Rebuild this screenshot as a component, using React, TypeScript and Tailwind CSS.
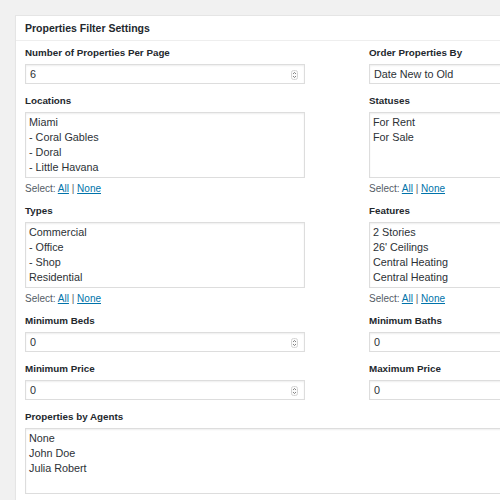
import React from 'react';

const Spinner = () => (
  <svg className="absolute right-[6px] top-[5px]" width="7" height="10" viewBox="0 0 7 10">
    <rect x="0.5" y="0.5" width="6" height="9" rx="2" fill="#fafafa" stroke="#d4d4d4" />
    <path d="M2 4L3.5 2.5L5 4" fill="none" stroke="#666" strokeWidth="0.8" />
    <path d="M2 6L3.5 7.5L5 6" fill="none" stroke="#666" strokeWidth="0.8" />
  </svg>
);

const Label = ({ children }: { children: React.ReactNode }) => (
  <div className="h-[14px] leading-[14px] text-[9.8px] font-bold text-[#23282d] mb-[4px]">{children}</div>
);

const NumberInput = ({ value }: { value: string }) => (
  <div className="relative h-[20px] w-[280px] border border-[#dddddd] bg-white shadow-[inset_0_1px_2px_rgba(0,0,0,0.07)] pl-[4px] leading-[18px] text-[10.8px] text-[#2c3136]">
    {value}
    <Spinner />
  </div>
);

const ListBox = ({ items, wide }: { items: string[]; wide?: boolean }) => (
  <div
    className={
      (wide ? 'w-[680px] ' : 'w-[280px] ') +
      'h-[66px] border border-[#dddddd] bg-white shadow-[inset_0_1px_2px_rgba(0,0,0,0.07)] pl-[3px] pt-[2px] text-[10.8px] leading-[15px] text-[#2c3136] overflow-hidden'
    }
  >
    {items.map((t) => (
      <div key={t}>{t}</div>
    ))}
  </div>
);

const SelectLinks = () => (
  <div className="mt-[4px] h-[14px] leading-[14px] text-[10px] text-[#555d66]">
    Select: <span className="text-[#0073aa] underline">All</span> | <span className="text-[#0073aa] underline">None</span>
  </div>
);

export default function App() {
  return (
    <div
      className="w-[500px] h-[500px] overflow-hidden bg-[#f1f1f1] pl-[15px] pt-[15px]"
      style={{ fontFamily: '"Liberation Sans", Arial, sans-serif' }}
    >
      <div className="w-[700px] h-[520px] bg-white border border-[#e5e5e5] shadow-[0_1px_1px_rgba(0,0,0,0.04)]">
        <div className="h-[25px] border-b border-[#eeeeee] pl-[9px] leading-[24px] text-[10.5px] font-bold text-[#23282d]">
          Properties Filter Settings
        </div>
        <div className="pl-[9px] pt-[5px] flex flex-col">
          <div className="flex gap-[64px]">
            <div>
              <Label>Number of Properties Per Page</Label>
              <NumberInput value="6" />
            </div>
            <div>
              <Label>Order Properties By</Label>
              <div className="h-[20px] w-[280px] border border-[#dddddd] bg-white shadow-[inset_0_1px_2px_rgba(0,0,0,0.07)] pl-[4px] leading-[18px] text-[10.8px] text-[#2c3136]">
                Date New to Old
              </div>
            </div>
          </div>

          <div className="flex gap-[64px] mt-[10px]">
            <div>
              <Label>Locations</Label>
              <ListBox items={['Miami', '- Coral Gables', '- Doral', '- Little Havana']} />
              <SelectLinks />
            </div>
            <div>
              <Label>Statuses</Label>
              <ListBox items={['For Rent', 'For Sale']} />
              <SelectLinks />
            </div>
          </div>

          <div className="flex gap-[64px] mt-[8px]">
            <div>
              <Label>Types</Label>
              <ListBox items={['Commercial', '- Office', '- Shop', 'Residential']} />
              <SelectLinks />
            </div>
            <div>
              <Label>Features</Label>
              <ListBox items={['2 Stories', "26' Ceilings", 'Central Heating', 'Central Heating']} />
              <SelectLinks />
            </div>
          </div>

          <div className="flex gap-[64px] mt-[8px]">
            <div>
              <Label>Minimum Beds</Label>
              <NumberInput value="0" />
            </div>
            <div>
              <Label>Minimum Baths</Label>
              <NumberInput value="0" />
            </div>
          </div>

          <div className="flex gap-[64px] mt-[10px]">
            <div>
              <Label>Minimum Price</Label>
              <NumberInput value="0" />
            </div>
            <div>
              <Label>Maximum Price</Label>
              <NumberInput value="0" />
            </div>
          </div>

          <div className="mt-[10px]">
            <Label>Properties by Agents</Label>
            <ListBox wide items={['None', 'John Doe', 'Julia Robert']} />
          </div>
        </div>
      </div>
    </div>
  );
}
